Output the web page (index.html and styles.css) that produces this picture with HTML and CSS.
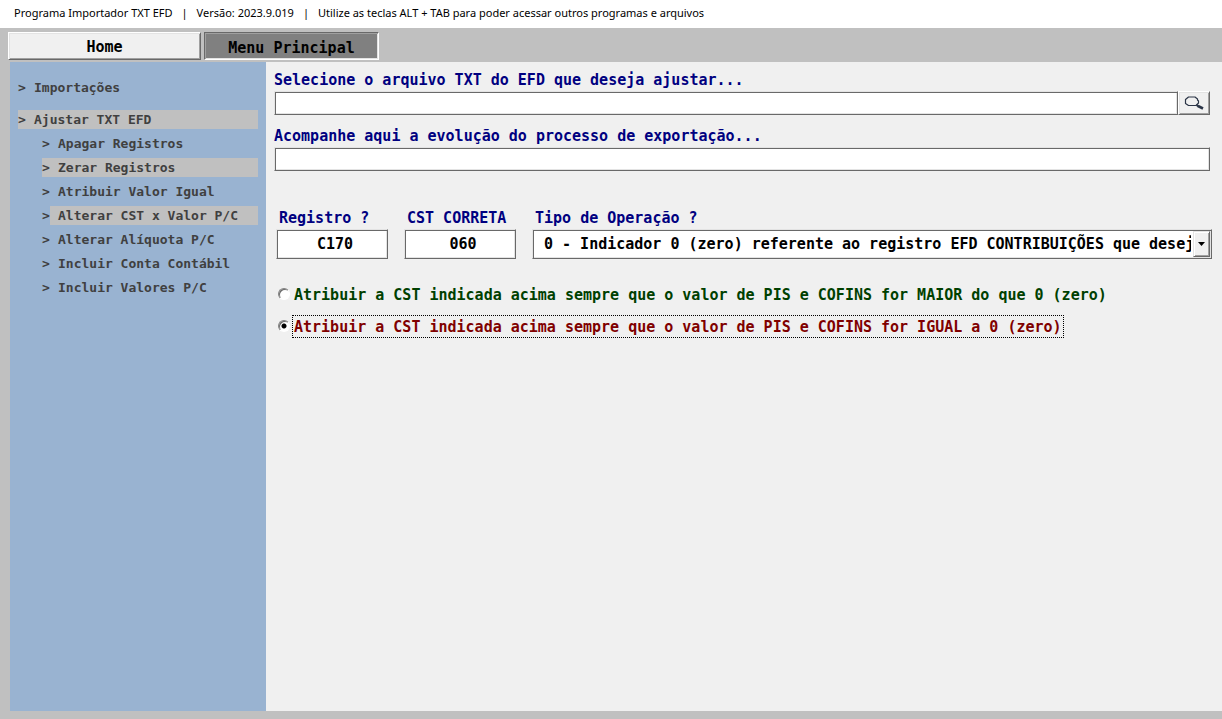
FILE: index.html
```html
<!DOCTYPE html>
<html lang="pt-BR">
<head>
<meta charset="utf-8">
<title>Programa Importador TXT EFD</title>
<link rel="stylesheet" href="styles.css">
</head>
<body>
<header class="titlebar">
  <span>Programa Importador TXT EFD</span><span>|</span><span>Versão: 2023.9.019</span><span>|</span><span>Utilize as teclas ALT + TAB para poder acessar outros programas e arquivos</span>
</header>
<nav class="tabs">
  <button type="button" class="tab tab-home">Home</button>
  <button type="button" class="tab tab-active">Menu Principal</button>
</nav>
<div class="workspace">
  <nav class="sidebar">
    <a class="item" href="#importacoes"><span class="mark">&gt;</span><span class="name">Importações</span></a>
    <a class="item item-group selected" href="#ajustar"><span class="mark">&gt;</span><span class="name">Ajustar TXT EFD</span></a>
    <div class="submenu">
      <a class="item" href="#apagar"><span class="mark">&gt;</span><span class="name">Apagar Registros</span></a>
      <a class="item selected" href="#zerar"><span class="mark">&gt;</span><span class="name">Zerar Registros</span></a>
      <a class="item" href="#atribuir"><span class="mark">&gt;</span><span class="name">Atribuir Valor Igual</span></a>
      <a class="item current" href="#alterar-cst"><span class="mark">&gt;</span><span class="name">Alterar CST x Valor P/C</span></a>
      <a class="item" href="#aliquota"><span class="mark">&gt;</span><span class="name">Alterar Alíquota P/C</span></a>
      <a class="item" href="#conta"><span class="mark">&gt;</span><span class="name">Incluir Conta Contábil</span></a>
      <a class="item" href="#valores"><span class="mark">&gt;</span><span class="name">Incluir Valores P/C</span></a>
    </div>
  </nav>
  <main class="content">
    <div class="field">
      <label for="arquivo">Selecione o arquivo TXT do EFD que deseja ajustar...</label>
      <div class="file-row">
        <input id="arquivo" class="sunken" type="text">
        <button type="button" class="search" aria-label="Procurar arquivo">
          <svg width="20" height="14" viewBox="0 0 20 14" fill="none" stroke="#2b3547"><path d="M4.500 1H11L13.500 3V4L14.500 5V7L12 9.500H4.500L1.500 7.500V3.500Z" stroke-width="1.200" stroke-linejoin="round"/><path d="M12.500 9L14.500 10.500" stroke-width="2"/><path d="M14 10L19 12.500" stroke-width="2.600"/></svg>
        </button>
      </div>
    </div>
    <div class="field">
      <label for="progresso">Acompanhe aqui a evolução do processo de exportação...</label>
      <input id="progresso" class="sunken" type="text">
    </div>
    <div class="params">
      <div class="param">
        <label for="registro">Registro ?</label>
        <input id="registro" class="sunken" type="text" value="C170">
      </div>
      <div class="param">
        <label for="cst">CST CORRETA</label>
        <input id="cst" class="sunken" type="text" value="060">
      </div>
      <div class="param param-wide">
        <label for="tipo">Tipo de Operação ?</label>
        <div class="combo">
          <select id="tipo" class="sunken"><option>0 - Indicador 0 (zero) referente ao registro EFD CONTRIBUIÇÕES que deseja</option></select>
          <span class="drop"><svg width="7" height="4" viewBox="0 0 7 4"><path d="M0 0H7L3.500 4Z" fill="#000"/></svg></span>
        </div>
      </div>
    </div>
    <div class="choices">
      <div class="choice"><input type="radio" name="regra" id="maior"><label class="maior" for="maior">Atribuir a CST indicada acima sempre que o valor de PIS e COFINS for MAIOR do que 0 (zero)</label></div>
      <div class="choice"><input type="radio" name="regra" id="igual" checked><label class="igual" for="igual">Atribuir a CST indicada acima sempre que o valor de PIS e COFINS for IGUAL a 0 (zero)</label></div>
    </div>
  </main>
</div>
</body>
</html>
```
FILE: styles.css
```css
* { box-sizing: border-box; }

body {
  margin: 0;
  min-height: 100vh;
  display: flex;
  flex-direction: column;
  background: #c0c0c0;
  font: bold 15px/20px "DejaVu Sans Mono", monospace;
}

button, input, select { font: inherit; color: #000; margin: 0; border-radius: 0; }

.titlebar {
  display: flex;
  gap: 9px;
  height: 28px;
  padding: 0 14px;
  background: #fff;
  color: #000;
  font: 11px/26px "Noto Sans", sans-serif;
  white-space: nowrap;
}

.tabs { display: flex; gap: 3px; padding: 4px 8px 2px; }

.tab { height: 28px; padding: 2px 0 0; border: 1px solid; }

.tab-home {
  width: 193px;
  background: #f0f0f0;
  border-color: #fff #696969 #696969 #fff;
  box-shadow: inset 1px 1px 0 #e3e3e3, inset -1px -1px 0 #a0a0a0;
}

.tab-active {
  width: 175px;
  padding-top: 4px;
  background: #808080;
  border-color: #696969 #fff #fff #696969;
  box-shadow: inset 1px 1px 0 #a0a0a0, inset -1px -1px 0 #e3e3e3;
}

.workspace { flex: 1; display: flex; padding: 0 0 8px 10px; }

.sidebar {
  flex: none;
  width: 256px;
  padding: 16px 8px;
  background: #99b3d1;
  font-size: 13px;
  line-height: 19px;
}

.item { display: flex; color: #404040; text-decoration: none; white-space: nowrap; }
.mark { width: 8px; }
.name { flex: 1; padding-left: 8px; }
.item-group { margin-top: 13px; }
.selected, .current .name { background: #c0c0c0; }

.submenu {
  display: flex;
  flex-direction: column;
  gap: 5px;
  margin: 5px 0 0 24px;
}

.content {
  flex: 1;
  min-width: 0;
  padding: 8px 12px 8px 8px;
  background: #f0f0f0;
  color: #000080;
}

.field { display: flex; flex-direction: column; gap: 1px; margin-bottom: 11px; }

.sunken {
  appearance: none;
  width: 100%;
  min-width: 0;
  height: 24px;
  padding: 0 4px;
  border: 1px solid;
  border-color: #e3e3e3 #696969 #696969 #e3e3e3;
  background: #fff;
  box-shadow: inset 1px 1px 0 #696969, inset -1px -1px 0 #e3e3e3;
  outline: none;
}

.file-row { display: flex; }

.search {
  flex: none;
  display: flex;
  align-items: center;
  justify-content: center;
  width: 32px;
  height: 24px;
  padding: 0;
  background: #f0f0f0;
  border: 1px solid;
  border-color: #fff #696969 #696969 #fff;
  box-shadow: inset 1px 1px 0 #e3e3e3, inset -1px -1px 0 #a0a0a0;
}

.params { display: flex; gap: 16px; margin: 37px -2px 0 2px; }
.param { flex: none; width: 112px; display: flex; flex-direction: column; gap: 1px; }
.param label { padding-left: 3px; white-space: nowrap; }
.param .sunken { height: 30px; padding: 0 4px 0 10px; text-align: center; }
.param-wide { flex: 1; min-width: 0; }

.combo { position: relative; display: flex; }
.param .combo .sunken { padding: 0 20px 0 11px; text-align: left; overflow: hidden; }

.drop {
  position: absolute;
  top: 2px;
  right: 2px;
  bottom: 2px;
  width: 17px;
  display: flex;
  align-items: center;
  justify-content: center;
  background: #f0f0f0;
  border: 1px solid;
  border-color: #e3e3e3 #696969 #696969 #e3e3e3;
  box-shadow: inset 1px 1px 0 #fff, inset -1px -1px 0 #a0a0a0;
  pointer-events: none;
}

.choices { display: flex; flex-direction: column; gap: 9px; margin-top: 24px; }
.choice { display: flex; align-items: flex-start; gap: 2px; padding-left: 4px; }
.choice label { padding: 2px 1px 0; border: 1px dotted transparent; line-height: 19px; white-space: nowrap; }

.choice input {
  appearance: none;
  flex: none;
  width: 12px;
  height: 12px;
  margin-top: 5px;
  border: 1px solid;
  border-color: #808080 #fff #fff #808080;
  border-radius: 50%;
  background: #fff;
  box-shadow: inset 1px 1px 0 #696969;
}

.choice input:checked { background: radial-gradient(circle, #000 0 2px, #fff 3px); }
.maior { color: #004000; }
.igual { color: #800000; }
.choice input:checked + label { border-color: #000; }
```
